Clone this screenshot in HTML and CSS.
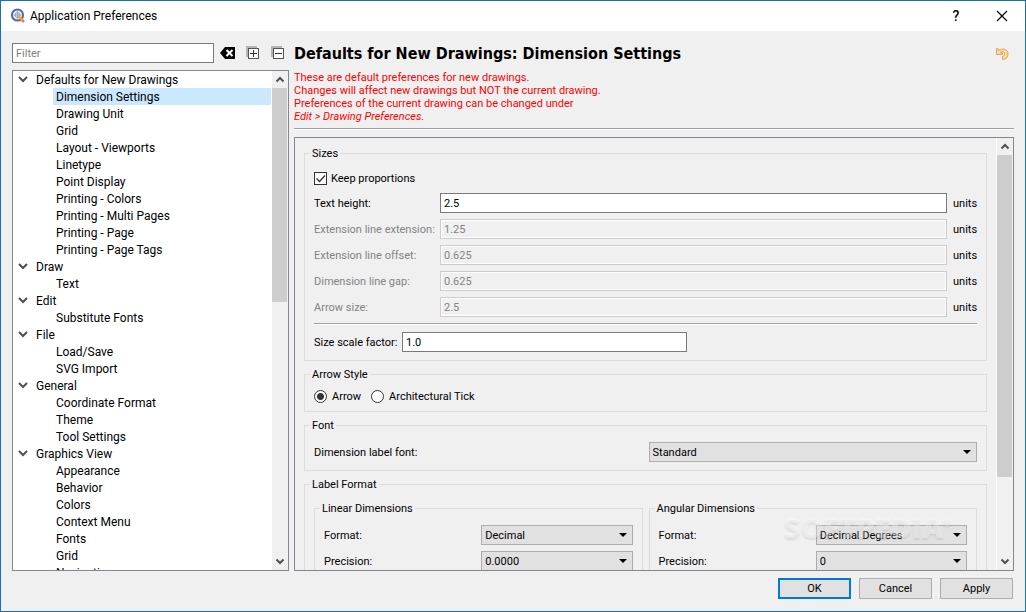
FILE: index.html
```html
<!DOCTYPE html>
<html lang="en">
<head>
  <meta charset="UTF-8">
  <meta name="viewport" content="width=device-width, initial-scale=1.0">
  <title>Application Preferences</title>
  <link rel="stylesheet" href="styles.css">
</head>
<body>
  <header class="titlebar">
    <svg class="app-icon" width="16" height="16" viewBox="0 0 16 16">
      <circle cx="7.500" cy="7" r="5.600" fill="#e9eef8" stroke="#5a6a9c" stroke-width="2"/>
      <path d="M7.500 3v8M3.500 7h8" stroke="#9aa9cf" stroke-width="1"/>
      <circle cx="7.500" cy="7" r="2.400" fill="none" stroke="#8fa2d2" stroke-width="1"/>
      <path d="M8 7.500l4.500 5" stroke="#f0a934" stroke-width="2.500"/>
      <path d="M12 12l2 2" stroke="#d9806f" stroke-width="2.500"/>
    </svg>
    <h1>Application Preferences</h1>
    <button class="caption-btn help" aria-label="Help">?</button>
    <button class="caption-btn" aria-label="Close">
      <svg width="12" height="12" viewBox="0 0 12 12"><path d="M1 1l10 10M11 1L1 11" stroke="#000" stroke-width="1.200"/></svg>
    </button>
  </header>

  <main class="content">
    <aside class="sidebar">
      <div class="filter-row">
        <input class="field" type="text" placeholder="Filter" aria-label="Filter">
        <button class="tool" aria-label="Clear filter">
          <svg width="15" height="14" viewBox="0 0 15 14">
            <path d="M0 7l5-6h10v12H5z" fill="#000"/>
            <path d="M6.500 4l6 6M12.500 4l-6 6" stroke="#fff" stroke-width="2"/>
          </svg>
        </button>
        <button class="tool" aria-label="Expand all">
          <svg width="14" height="14" viewBox="0 0 14 14">
            <path d="M0 0h11v2H2v9H0z" fill="#b4b4b4"/>
            <rect x="2.500" y="2.500" width="10" height="10" fill="#fff" stroke="#555"/>
            <path d="M4 7.500h7M7.500 4v7" stroke="#333"/>
          </svg>
        </button>
        <button class="tool" aria-label="Collapse all">
          <svg width="14" height="14" viewBox="0 0 14 14">
            <path d="M0 0h11v2H2v9H0z" fill="#b4b4b4"/>
            <rect x="2.500" y="2.500" width="10" height="10" fill="#fff" stroke="#555"/>
            <path d="M4 7.500h7" stroke="#333"/>
          </svg>
        </button>
      </div>

      <div class="scroll-box tree-box">
        <nav class="tree">
          <details open>
            <summary>Defaults for New Drawings</summary>
            <a class="selected" href="#">Dimension Settings</a>
            <a href="#">Drawing Unit</a>
            <a href="#">Grid</a>
            <a href="#">Layout - Viewports</a>
            <a href="#">Linetype</a>
            <a href="#">Point Display</a>
            <a href="#">Printing - Colors</a>
            <a href="#">Printing - Multi Pages</a>
            <a href="#">Printing - Page</a>
            <a href="#">Printing - Page Tags</a>
          </details>
          <details open>
            <summary>Draw</summary>
            <a href="#">Text</a>
          </details>
          <details open>
            <summary>Edit</summary>
            <a href="#">Substitute Fonts</a>
          </details>
          <details open>
            <summary>File</summary>
            <a href="#">Load/Save</a>
            <a href="#">SVG Import</a>
          </details>
          <details open>
            <summary>General</summary>
            <a href="#">Coordinate Format</a>
            <a href="#">Theme</a>
            <a href="#">Tool Settings</a>
          </details>
          <details open>
            <summary>Graphics View</summary>
            <a href="#">Appearance</a>
            <a href="#">Behavior</a>
            <a href="#">Colors</a>
            <a href="#">Context Menu</a>
            <a href="#">Fonts</a>
            <a href="#">Grid</a>
            <a href="#">Navigation</a>
          </details>
        </nav>
        <div class="scrollbar">
          <svg class="arrow" width="16" height="17" viewBox="0 0 16 17"><path d="M4.500 10.500L8 7l3.500 3.500"/></svg>
          <div class="track"><div class="thumb tree-thumb"></div></div>
          <svg class="arrow" width="16" height="17" viewBox="0 0 16 17"><path d="M4.500 6.500L8 10l3.500-3.500"/></svg>
        </div>
      </div>
    </aside>

    <section class="page">
      <div class="page-head">
        <h2>Defaults for New Drawings: Dimension Settings</h2>
        <button class="tool" aria-label="Reset to defaults">
          <svg width="14" height="14" viewBox="0 0 14 14">
            <path d="M1.500 1.500v6H7.500V6L5.500 5.500C7 4.300 9.500 4.500 9.500 7c0 1.500-.8 2.200-2 2.500v3c3.500 0 5.500-2.200 5.500-5.500C13 2 7.500.8 3.600 3.500L3 1.500z" fill="#fbd9a0" stroke="#dfa45c"/>
          </svg>
        </button>
      </div>
      <p class="notice">
        These are default preferences for new drawings.<br>
        Changes will affect new drawings but NOT the current drawing.<br>
        Preferences of the current drawing can be changed under<br>
        <i>Edit &gt; Drawing Preferences.</i>
      </p>
      <hr>

      <div class="scroll-box page-box">
        <form class="settings">
          <fieldset>
            <legend>Sizes</legend>
            <label class="choice"><input type="checkbox" checked> Keep proportions</label>
            <div class="size-row">
              <label for="text-height">Text height:</label>
              <input class="field" id="text-height" type="text" value="2.5">
              <span>units</span>
            </div>
            <div class="size-row">
              <label class="off" for="ext-line">Extension line extension:</label>
              <input class="field" id="ext-line" type="text" value="1.25" disabled>
              <span>units</span>
            </div>
            <div class="size-row">
              <label class="off" for="ext-offset">Extension line offset:</label>
              <input class="field" id="ext-offset" type="text" value="0.625" disabled>
              <span>units</span>
            </div>
            <div class="size-row">
              <label class="off" for="line-gap">Dimension line gap:</label>
              <input class="field" id="line-gap" type="text" value="0.625" disabled>
              <span>units</span>
            </div>
            <div class="size-row">
              <label class="off" for="arrow-size">Arrow size:</label>
              <input class="field" id="arrow-size" type="text" value="2.5" disabled>
              <span>units</span>
            </div>
            <hr>
            <div class="scale-row">
              <label for="scale">Size scale factor:</label>
              <input class="field" id="scale" type="text" value="1.0">
            </div>
          </fieldset>

          <fieldset class="choices">
            <legend>Arrow Style</legend>
            <label class="choice"><input type="radio" name="arrow" checked> Arrow</label>
            <label class="choice"><input type="radio" name="arrow"> Architectural Tick</label>
          </fieldset>

          <fieldset>
            <legend>Font</legend>
            <div class="pair">
              <label for="font">Dimension label font:</label>
              <select id="font"><option>Standard</option></select>
            </div>
          </fieldset>

          <fieldset>
            <legend>Label Format</legend>
            <div class="pair">
              <fieldset>
                <legend>Linear Dimensions</legend>
                <div class="pair">
                  <label for="linear-format">Format:</label>
                  <select id="linear-format"><option>Decimal</option></select>
                  <label for="linear-precision">Precision:</label>
                  <select id="linear-precision"><option>0.0000</option></select>
                </div>
              </fieldset>
              <fieldset>
                <legend>Angular Dimensions</legend>
                <div class="pair">
                  <label for="angular-format">Format:</label>
                  <select id="angular-format"><option>Decimal Degrees</option></select>
                  <label for="angular-precision">Precision:</label>
                  <select id="angular-precision"><option>0</option></select>
                </div>
              </fieldset>
            </div>
          </fieldset>
        </form>
        <div class="scrollbar page-scrollbar">
          <svg class="arrow" width="16" height="17" viewBox="0 0 16 17"><path d="M4.500 10.500L8 7l3.500 3.500"/></svg>
          <div class="track"><div class="thumb page-thumb"></div></div>
          <svg class="arrow" width="16" height="17" viewBox="0 0 16 17"><path d="M4.500 6.500L8 10l3.500-3.500"/></svg>
        </div>
      </div>
    </section>
  </main>

  <footer class="buttons">
    <button class="btn primary">OK</button>
    <button class="btn">Cancel</button>
    <button class="btn">Apply</button>
  </footer>

  <div class="watermark">SOFTPEDIA<sup>®</sup></div>
</body>
</html>
```

FILE: styles.css
```css
:root {
  --accent: #1a6fb5;
  --face: #f0f0f0;
  --frame: #828790;
  --group: #dcdcdc;
  --ui: Roboto, "Open Sans", sans-serif;
  --heading: "DejaVu Sans Condensed", "DejaVu Sans", sans-serif;
}

* {
  margin: 0;
  padding: 0;
  box-sizing: border-box;
}

body {
  position: relative;
  height: 100vh;
  display: flex;
  flex-direction: column;
  border: 1px solid var(--accent);
  background: var(--face);
  color: #000;
  font-family: var(--ui);
  font-size: 11px;
  overflow: hidden;
}

button, input, select {
  font: inherit;
  color: inherit;
}

.titlebar {
  display: flex;
  align-items: center;
  height: 30px;
  padding-left: 9px;
  background: #fff;
}

.titlebar h1 {
  flex: 1;
  margin-left: 4px;
  font-size: 12px;
  font-weight: 400;
}

.caption-btn {
  display: flex;
  align-items: center;
  justify-content: center;
  width: 46px;
  height: 30px;
  border: 0;
  background: none;
}

.help {
  font-size: 14px;
  font-weight: 500;
}

.content {
  flex: 1;
  min-height: 0;
  display: flex;
  gap: 5px;
  padding: 12px 11px 0;
}

.sidebar {
  width: 277px;
  display: flex;
  flex-direction: column;
  gap: 7px;
}

.filter-row {
  display: flex;
  align-items: center;
  gap: 11px;
  padding-right: 4px;
}

.filter-row .field {
  flex: 1;
  margin-right: -5px;
}

.field {
  min-width: 0;
  height: 20px;
  padding: 1px 3px 0;
  border: 1px solid #7a7a7a;
  background: #fff;
}

.field::placeholder {
  color: #808080;
}

.field:disabled {
  border-color: #ccc;
  background: var(--face);
  box-shadow: inset 0 0 0 1px #fff;
  color: #838383;
}

.tool {
  display: flex;
  border: 0;
  background: none;
}

.scroll-box {
  flex: 1;
  min-height: 0;
  display: flex;
  border: 1px solid var(--frame);
  overflow: hidden;
}

.tree-box {
  background: #fff;
}

.tree {
  flex: 1;
  overflow: hidden;
  font-size: 12px;
  line-height: 15px;
}

.tree summary {
  padding: 2px 0 0 23px;
  list-style: none;
  background: url("data:image/svg+xml,%3Csvg xmlns='http://www.w3.org/2000/svg' width='10' height='7'%3E%3Cpath d='M1 1l4 4 4-4' fill='none' stroke='%23505050' stroke-width='2'/%3E%3C/svg%3E") 5px 5px no-repeat;
}

.tree a {
  display: block;
  margin: 0 1px 0 40px;
  padding: 2px 0 0 3px;
  color: inherit;
  text-decoration: none;
}

.tree .selected {
  background: #cce8ff;
}

.scrollbar {
  display: flex;
  flex-direction: column;
  width: 16px;
  background: var(--face);
}

.page-scrollbar {
  width: 17px;
  border-left: 1px solid #fff;
}

.arrow {
  display: block;
  fill: none;
  stroke: #505050;
  stroke-width: 2;
}

.track {
  flex: 1;
}

.thumb {
  width: 15px;
  background: #cdcdcd;
}

.tree-thumb {
  height: 46%;
}

.page-thumb {
  height: 81%;
}

.page {
  flex: 1;
  min-width: 0;
  display: flex;
  flex-direction: column;
}

.page-head {
  display: flex;
  align-items: center;
  justify-content: space-between;
  height: 22px;
  padding-right: 5px;
}

.page-head h2 {
  font-family: var(--heading);
  font-size: 16px;
  line-height: 22px;
}

.notice {
  margin: 6px 0 5px;
  line-height: 13px;
  color: #f00;
}

hr {
  height: 2px;
  border: 0;
  border-top: 1px solid #a0a0a0;
  background: #fff;
}

.page-box {
  margin-top: 7px;
}

.settings {
  flex: 1;
  min-width: 0;
  display: flex;
  flex-direction: column;
  gap: 6px;
  padding: 8px 9px 0;
}

fieldset {
  min-width: 0;
  padding: 9px 9px 8px;
  border: 1px solid var(--group);
}

legend {
  margin-left: -4px;
  padding: 0 2px;
  line-height: 15px;
}

label {
  white-space: nowrap;
}

.settings hr {
  margin: 6px 0 7px;
}

.choice {
  display: flex;
  align-items: center;
  gap: 4px;
  height: 17px;
}

.choice input {
  width: 13px;
  height: 13px;
  appearance: none;
  border: 1px solid #333;
  background: #fff;
}

.choice input[type="checkbox"]:checked {
  background: #fff url("data:image/svg+xml,%3Csvg xmlns='http://www.w3.org/2000/svg' width='11' height='11'%3E%3Cpath d='M1.500 5.500l3 3 5.500-6' fill='none' stroke='%23333' stroke-width='1.300'/%3E%3C/svg%3E") center no-repeat;
}

.choice input[type="radio"] {
  border-radius: 50%;
}

.choice input[type="radio"]:checked {
  background: radial-gradient(circle, #333 3px, #fff 4px);
}

.choices {
  display: flex;
  gap: 10px;
  padding: 6px 9px;
}

.choices .choice {
  gap: 5px;
}

.size-row {
  display: grid;
  grid-template-columns: 120px 1fr 24px;
  column-gap: 6px;
  align-items: center;
  margin-top: 6px;
}

.off {
  color: #838383;
}

.scale-row {
  display: grid;
  grid-template-columns: 82px 1fr 1fr;
  column-gap: 6px;
  align-items: center;
}

.pair {
  display: grid;
  grid-template-columns: 1fr 1fr;
  gap: 6px;
  align-items: center;
}

select {
  width: 100%;
  height: 20px;
  padding: 1px 3px 0;
  appearance: none;
  border: 1px solid #adadad;
  border-radius: 0;
  background: #e1e1e1 url("data:image/svg+xml,%3Csvg xmlns='http://www.w3.org/2000/svg' width='8' height='4'%3E%3Cpath d='M0 0h8L4 4z'/%3E%3C/svg%3E") right 5px center no-repeat;
}

.buttons {
  display: flex;
  justify-content: flex-end;
  gap: 8px;
  padding: 7px 12px 12px;
}

.btn {
  width: 73px;
  height: 21px;
  border: 1px solid #adadad;
  background: #e1e1e1;
}

.primary {
  border: 2px solid #0078d7;
}

/* stamp laid over the lower right corner of the window */
.watermark {
  position: absolute;
  right: 74px;
  bottom: 64px;
  color: rgba(255, 255, 255, 0.4);
  font: 800 29px/40px "Open Sans", sans-serif;
  text-shadow: 0 2px 2px rgba(0, 0, 0, 0.08);
  pointer-events: none;
}

.watermark sup {
  font-size: 10px;
  line-height: 10px;
  vertical-align: 12px;
}
```
